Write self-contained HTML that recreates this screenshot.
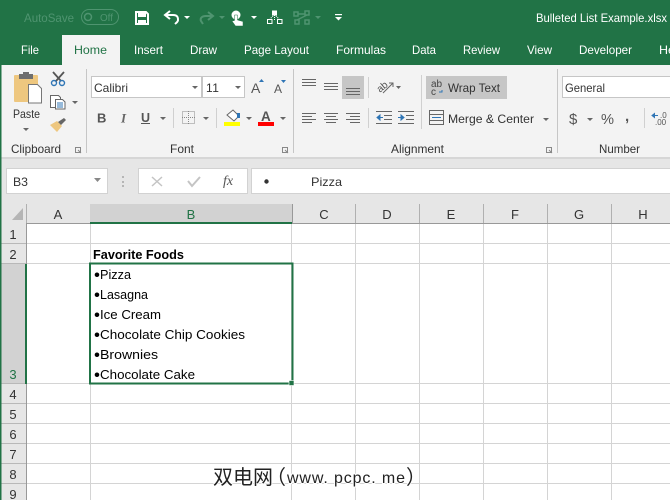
<!DOCTYPE html>
<html><head><meta charset="utf-8"><style>
html,body{margin:0;padding:0;background:#fff;width:670px;height:500px;overflow:hidden}
svg{display:block}
text{font-family:"Liberation Sans",sans-serif;font-size:12px;fill:#333}
.t{fill:#fff}
.c{fill:#000;font-size:13px}
.b{fill:#000;font-size:17px}
.h{fill:#333;font-size:13px;text-anchor:middle}
</style></head><body>
<svg width="670" height="500" viewBox="0 0 670 500" xmlns="http://www.w3.org/2000/svg">
<!-- title bar -->
<rect width="670" height="65" fill="#217346"/>
<rect x="62" y="35" width="58" height="30" fill="#f3f3f3"/>
<text x="24" y="22" textLength="50" lengthAdjust="spacingAndGlyphs" style="fill:#4f9470;font-size:12px">AutoSave</text>
<rect x="81.500" y="9.500" width="37" height="15" rx="7.500" fill="none" stroke="#4f9470"/>
<circle cx="88" cy="17" r="3.500" fill="none" stroke="#4f9470" stroke-width="1.500"/>
<text x="100" y="21" textLength="13" lengthAdjust="spacingAndGlyphs" style="fill:#4f9470;font-size:10px">Off</text>
<!-- save -->
<path d="M136 12h10l2 2v10h-12z" fill="none" stroke="#fff" stroke-width="2"/><rect x="138" y="12" width="8" height="5" fill="#fff"/><rect x="138" y="20" width="8" height="4" fill="#fff"/>
<!-- undo -->
<path d="M170 11l-5 4 5 4M166 15h7c5 0 5 3 5 5s-2 3-3 4" fill="none" stroke="#fff" stroke-width="2"/>
<path d="M184 16h6l-3 3z" fill="#fff"/>
<path d="M208 12l5 4-5 4M212 16h-6c-5 0-6 3-5 5l2 3" fill="none" stroke="#4f9470" stroke-width="2"/>
<path d="M219 16h6l-3 3z" fill="#4f9470"/>
<!-- touch -->
<circle cx="236" cy="15" r="4.500" fill="#fff"/>
<path d="M234.500 15h3v5l5.500 1.500v4.500h-7.500l-3.500-5 2.500-.5z" fill="#fff" stroke="#217346" stroke-width=".5"/>
<path d="M251 16h6l-3 3z" fill="#fff"/>
<!-- tree -->
<g fill="#fff"><path d="M272 10.500h5v5h-5z"/><path d="M267 19h5.500v5H267zm1 1v3h3.500v-3zM277 19h5.500v5H277zm1 1v3h3.500v-3z" fill-rule="evenodd"/></g>
<path d="M273 16l-3 3M276 16l3 3M274.500 15v5" stroke="#fff" stroke-dasharray="1 1" fill="none"/>
<g fill="none" stroke="#4f9470" stroke-width="1.500"><rect x="294" y="12" width="4" height="4"/><rect x="305" y="11" width="4" height="4"/><rect x="295" y="20" width="4" height="4"/><rect x="305" y="20" width="4" height="4"/><path d="M298 14h7M297 20l10-5"/></g>
<path d="M315 16h6l-3 3z" fill="#4f9470"/>
<path d="M335 14h7v1.200h-7z" fill="#fff"/><path d="M335 17h7l-3.500 3.500z" fill="#fff"/>
<text class="t" x="536" y="22" textLength="131" lengthAdjust="spacingAndGlyphs">Bulleted List Example.xlsx</text>
<!-- tabs -->
<text class="t" x="21" y="54" textLength="18" lengthAdjust="spacingAndGlyphs">File</text>
<text x="74" y="54" textLength="33" lengthAdjust="spacingAndGlyphs" style="fill:#217346">Home</text>
<text class="t" x="134" y="54" textLength="29" lengthAdjust="spacingAndGlyphs">Insert</text>
<text class="t" x="190" y="54" textLength="27" lengthAdjust="spacingAndGlyphs">Draw</text>
<text class="t" x="244" y="54" textLength="65" lengthAdjust="spacingAndGlyphs">Page Layout</text>
<text class="t" x="336" y="54" textLength="50" lengthAdjust="spacingAndGlyphs">Formulas</text>
<text class="t" x="412" y="54" textLength="24" lengthAdjust="spacingAndGlyphs">Data</text>
<text class="t" x="463" y="54" textLength="37" lengthAdjust="spacingAndGlyphs">Review</text>
<text class="t" x="527" y="54" textLength="25" lengthAdjust="spacingAndGlyphs">View</text>
<text class="t" x="579" y="54" textLength="53" lengthAdjust="spacingAndGlyphs">Developer</text>
<text class="t" x="659" y="54" textLength="16" lengthAdjust="spacingAndGlyphs">He</text>
<!-- ribbon -->
<rect y="65" width="670" height="92" fill="#f3f3f3"/>
<rect y="157" width="670" height="2" fill="#d6d6d6"/>
<rect y="159" width="670" height="45" fill="#e6e6e6"/>
<g fill="#c6c6c6"><rect x="86" y="69" width="1" height="84"/><rect x="293" y="69" width="1" height="84"/><rect x="557" y="69" width="1" height="84"/></g>
<g fill="#d0d0d0"><rect x="173" y="108" width="1" height="20"/><rect x="216" y="108" width="1" height="20"/><rect x="368" y="77" width="1" height="21"/><rect x="368" y="108" width="1" height="20"/><rect x="421" y="75" width="1" height="54"/><rect x="644" y="108" width="1" height="20"/></g>
<!-- paste -->
<rect x="14" y="75" width="24" height="27" rx="1" fill="#eec77f"/>
<rect x="19" y="74" width="14" height="5" fill="#6e6e6e"/><rect x="23" y="72" width="6" height="3" fill="#6e6e6e"/>
<path d="M28.500 84.500h9l4 4v14.500h-13z" fill="#fff" stroke="#777"/>
<text x="13" y="118" textLength="27" lengthAdjust="spacingAndGlyphs">Paste</text>
<path d="M23 128h6l-3 3z" fill="#666"/>
<!-- scissors -->
<path d="M53 72l8 9M64 72l-8 9" stroke="#555" stroke-width="1.800"/>
<circle cx="54" cy="83" r="2.500" fill="none" stroke="#2f75b5" stroke-width="1.400"/><circle cx="62" cy="83" r="2.500" fill="none" stroke="#2f75b5" stroke-width="1.400"/>
<!-- copy -->
<path d="M50.500 95.500h8l2 2v10h-10z" fill="#fff" stroke="#666"/>
<path d="M55.500 99.500h7l2.500 2.500v7h-9.500z" fill="#fff" stroke="#666"/>
<path d="M57 103h6M57 105h6M57 107h6" stroke="#2f75b5"/>
<path d="M72 101h6l-3 3z" fill="#666"/>
<!-- painter -->
<path d="M50 125l7-4 5 5-5 6z" fill="#eec77f"/><path d="M58 122l6-4 2 2-5 5z" fill="#666"/>
<text x="11" y="153" textLength="50" lengthAdjust="spacingAndGlyphs">Clipboard</text>
<path d="M75.500 147.500h5v5h-5zM78 150l3 3" fill="none" stroke="#888"/>
<!-- font -->
<rect x="91.500" y="76.500" width="110" height="21" fill="#fff" stroke="#c6c6c6"/>
<rect x="202.500" y="76.500" width="42" height="21" fill="#fff" stroke="#c6c6c6"/>
<text x="94" y="92" textLength="34" lengthAdjust="spacingAndGlyphs">Calibri</text>
<text x="206" y="92" style="letter-spacing:.5px">11</text>
<path d="M192 86h6l-3 3z" fill="#666"/><path d="M235 86h6l-3 3z" fill="#666"/>
<text x="251" y="93" style="font-size:14px;fill:#555">A</text><path d="M259 82h5l-2.500-3z" fill="#2f75b5"/>
<text x="274" y="93" style="font-size:12px;fill:#555">A</text><path d="M281 80h5l-2.500 3z" fill="#2f75b5"/>
<text x="97" y="122.500" style="font-size:13px;font-weight:bold;fill:#555">B</text>
<text x="121" y="122.500" style="font-size:13px;font-style:italic;font-family:'Liberation Serif',serif;font-weight:bold;fill:#666">I</text>
<text x="141" y="122" style="font-size:12.500px;font-weight:bold;fill:#555">U</text><rect x="141" y="123" width="9" height="1" fill="#555"/>
<path d="M160 117h6l-3 3z" fill="#666"/>
<rect x="182.500" y="111.500" width="12" height="12" fill="none" stroke="#888" stroke-dasharray="1 1"/><path d="M188.500 111v13M182 117.500h13" stroke="#888" stroke-dasharray="1 1"/>
<path d="M203 117h6l-3 3z" fill="#666"/>
<path d="M227 115l6-5 6 6-5 5z" fill="#fff" stroke="#666"/><path d="M237 113h3v5h-3z" fill="#2f75b5"/>
<rect x="224" y="122" width="16" height="4" fill="#ff0"/>
<path d="M246 117h6l-3 3z" fill="#666"/>
<text x="261" y="121" style="font-size:13.500px;fill:#555;font-weight:bold">A</text>
<rect x="258" y="122" width="16" height="4" fill="#f00"/>
<path d="M280 117h6l-3 3z" fill="#666"/>
<text x="170" y="153" textLength="24" lengthAdjust="spacingAndGlyphs">Font</text>
<path d="M282.500 147.500h5v5h-5zM285 150l3 3" fill="none" stroke="#888"/>
<!-- alignment -->
<rect x="342" y="76" width="22" height="23" fill="#c6c6c6"/>
<g stroke="#666" fill="none">
<path d="M302 79.500h14M302 82.500h14M302 85.500h14"/>
<path d="M324 83.500h14M324 86.500h14M324 89.500h14"/>
<path d="M346 88.500h14M346 91.500h14M346 94.500h14"/>
<path d="M302 113.500h14M302 116.500h10M302 119.500h14M302 122.500h10"/>
<path d="M324 113.500h14M326 116.500h10M324 119.500h14M326 122.500h10"/>
<path d="M346 113.500h14M350 116.500h10M346 119.500h14M350 122.500h10"/>
<path d="M376 111.500h16M384 115.500h8M384 119.500h8M376 123.500h16"/>
<path d="M398 111.500h16M406 115.500h8M406 119.500h8M398 123.500h16"/>
<path d="M383 93l10-10M389 83h4v4"/>
</g>
<path d="M377 117.500h6M377 117.500l3-2.500v5z" stroke="#2f75b5" fill="#2f75b5"/>
<path d="M398 117.500h6M404 117.500l-3-2.500v5z" stroke="#2f75b5" fill="#2f75b5"/>
<text x="376" y="90" style="font-size:10px;fill:#555" transform="rotate(-40 382 86)">ab</text>
<path d="M396 86h5l-2.500 3z" fill="#666"/>
<rect x="426" y="76" width="81" height="23" fill="#c6c6c6"/>
<text x="431" y="87" style="font-size:10px;fill:#444">ab</text><text x="431" y="95" style="font-size:10px;fill:#444">c</text><path d="M439 92h3v-2" fill="none" stroke="#2f75b5"/>
<text x="448" y="92" textLength="52" lengthAdjust="spacingAndGlyphs">Wrap Text</text>
<rect x="429.500" y="110.500" width="14" height="14" fill="none" stroke="#666"/><path d="M430 114.500h13M430 120.500h13" stroke="#666"/><path d="M432 117.500h9" stroke="#2f75b5"/>
<text x="448" y="123" textLength="86" lengthAdjust="spacingAndGlyphs">Merge &amp; Center</text>
<path d="M543 118h6l-3 3z" fill="#666"/>
<text x="391" y="153" textLength="53" lengthAdjust="spacingAndGlyphs">Alignment</text>
<path d="M546.500 147.500h5v5h-5zM549 150l3 3" fill="none" stroke="#888"/>
<!-- number -->
<rect x="562.500" y="76.500" width="120" height="21" fill="#fff" stroke="#c6c6c6"/>
<text x="565" y="92" textLength="40" lengthAdjust="spacingAndGlyphs">General</text>
<text x="569" y="124" style="font-size:15px;fill:#555">$</text>
<path d="M587 118h6l-3 3z" fill="#666"/>
<text x="601" y="124" style="font-size:14.500px;fill:#555" textLength="13" lengthAdjust="spacingAndGlyphs">%</text>
<text x="625" y="121" style="font-size:15px;font-weight:bold;fill:#555">,</text>
<path d="M652 115.500h6M652 115.500l2.500-2v4z" stroke="#2f75b5" fill="#2f75b5"/>
<text x="660" y="118" style="font-size:8px;fill:#555">.0</text><text x="655" y="125" style="font-size:8px;fill:#555">.00</text>
<text x="599" y="153" textLength="41" lengthAdjust="spacingAndGlyphs">Number</text>
<!-- formula bar -->
<rect x="6.500" y="168.500" width="101" height="25" fill="#fff" stroke="#d2d2d2"/>
<text x="13" y="186" textLength="15" lengthAdjust="spacingAndGlyphs">B3</text>
<path d="M94 178h7l-3.500 4z" fill="#888"/>
<g fill="#b5b5b5"><rect x="122" y="176" width="2" height="2"/><rect x="122" y="181" width="2" height="2"/><rect x="122" y="185" width="2" height="2"/></g>
<rect x="138.500" y="168.500" width="109" height="25" fill="#fff" stroke="#d2d2d2"/>
<path d="M152 177l10 9M162 177l-10 9" stroke="#c4c4c4" stroke-width="1.500"/>
<path d="M188 181l4 5 8-9" stroke="#c4c4c4" stroke-width="2" fill="none"/>
<text x="223" y="185" style="font-family:'Liberation Serif',serif;font-style:italic;font-size:14px;fill:#555">fx</text>
<rect x="251.500" y="168.500" width="420" height="25" fill="#fff" stroke="#d2d2d2"/>
<circle cx="266.500" cy="181.500" r="2.200" fill="#333"/>
<text x="311" y="186" textLength="31" lengthAdjust="spacingAndGlyphs">Pizza</text>
<!-- headers -->
<rect y="204" width="670" height="20" fill="#e6e6e6"/>
<rect y="204" width="26" height="296" fill="#e6e6e6"/>
<rect x="90" y="204" width="202" height="19" fill="#d2d2d2"/>
<rect x="0" y="264" width="26" height="120" fill="#d2d2d2"/>
<path d="M23 208v12h-11z" fill="#b5b5b5"/>
<g fill="#b0b0b0"><rect x="26" y="204" width="1" height="19"/><rect x="355" y="204" width="1" height="19"/><rect x="419" y="204" width="1" height="19"/><rect x="483" y="204" width="1" height="19"/><rect x="547" y="204" width="1" height="19"/><rect x="611" y="204" width="1" height="19"/></g>
<rect x="292" y="204" width="1" height="19" fill="#999"/>
<rect x="26" y="223" width="644" height="1" fill="#999"/>
<rect x="90" y="222" width="202" height="2" fill="#217346"/>
<!-- grid -->
<g fill="#d4d4d4">
<rect x="27" y="243" width="643" height="1"/><rect x="27" y="263" width="643" height="1"/><rect x="27" y="383" width="643" height="1"/><rect x="27" y="403" width="643" height="1"/><rect x="27" y="423" width="643" height="1"/><rect x="27" y="443" width="643" height="1"/><rect x="27" y="463" width="643" height="1"/><rect x="27" y="483" width="643" height="1"/>
<rect x="90" y="224" width="1" height="276"/><rect x="291" y="224" width="1" height="276"/><rect x="355" y="224" width="1" height="276"/><rect x="419" y="224" width="1" height="276"/><rect x="483" y="224" width="1" height="276"/><rect x="547" y="224" width="1" height="276"/><rect x="611" y="224" width="1" height="276"/>
</g>
<g fill="#b8b8b8"><rect y="243" width="26" height="1"/><rect y="263" width="26" height="1"/><rect y="383" width="26" height="1"/><rect y="403" width="26" height="1"/><rect y="423" width="26" height="1"/><rect y="443" width="26" height="1"/><rect y="463" width="26" height="1"/><rect y="483" width="26" height="1"/></g>
<rect x="26" y="224" width="1" height="276" fill="#999"/>
<rect x="25" y="264" width="2" height="120" fill="#217346"/>
<rect x="0" y="65" width="1.500" height="435" fill="#217346"/>
<text class="h" x="58" y="219">A</text><text class="h" x="191" y="219" style="fill:#217346">B</text><text class="h" x="324" y="219">C</text><text class="h" x="387" y="219">D</text><text class="h" x="451" y="219">E</text><text class="h" x="515" y="219">F</text><text class="h" x="579" y="219">G</text><text class="h" x="643" y="219">H</text>
<text class="h" x="13" y="239">1</text><text class="h" x="13" y="259">2</text><text class="h" x="13" y="379" style="fill:#217346">3</text><text class="h" x="13" y="399">4</text><text class="h" x="13" y="419">5</text><text class="h" x="13" y="439">6</text><text class="h" x="13" y="459">7</text><text class="h" x="13" y="479">8</text><text class="h" x="13" y="499">9</text>
<!-- cells -->
<text class="c" x="93" y="259" textLength="91" lengthAdjust="spacingAndGlyphs" style="font-weight:bold">Favorite Foods</text>
<text class="b" x="94" y="280.500">•</text><text class="c" x="100" y="279" textLength="31" lengthAdjust="spacingAndGlyphs">Pizza</text>
<text class="b" x="94" y="300.500">•</text><text class="c" x="100" y="299" textLength="48" lengthAdjust="spacingAndGlyphs">Lasagna</text>
<text class="b" x="94" y="320.500">•</text><text class="c" x="100" y="319" textLength="61" lengthAdjust="spacingAndGlyphs">Ice Cream</text>
<text class="b" x="94" y="340.500">•</text><text class="c" x="100" y="339" textLength="145" lengthAdjust="spacingAndGlyphs">Chocolate Chip Cookies</text>
<text class="b" x="94" y="360.500">•</text><text class="c" x="100" y="359" textLength="58" lengthAdjust="spacingAndGlyphs">Brownies</text>
<text class="b" x="94" y="380.500">•</text><text class="c" x="100" y="379" textLength="95" lengthAdjust="spacingAndGlyphs">Chocolate Cake</text>
<!-- selection -->
<rect x="90" y="263.500" width="202.500" height="120" fill="none" stroke="#217346" stroke-width="2"/>
<rect x="289" y="380.500" width="5" height="5" fill="#217346" stroke="#fff" stroke-width=".6"/>
<!-- watermark -->
<text x="213" y="484" stroke="#fff" stroke-width="2" style="paint-order:stroke;font-family:'Liberation Sans','Noto Sans CJK SC',sans-serif;font-size:20px;fill:#222">双电网</text>
<text x="266" y="484" stroke="#fff" stroke-width="2" style="paint-order:stroke;font-family:'Liberation Sans','Noto Sans CJK SC',sans-serif;font-size:20px;fill:#222">（</text>
<text x="287" y="483" textLength="118" lengthAdjust="spacing" stroke="#fff" stroke-width="2" style="paint-order:stroke;font-size:16px;fill:#222">www. pcpc. me</text>
<text x="406" y="484" stroke="#fff" stroke-width="2" style="paint-order:stroke;font-family:'Liberation Sans','Noto Sans CJK SC',sans-serif;font-size:20px;fill:#222">）</text>
</svg>
</body></html>
